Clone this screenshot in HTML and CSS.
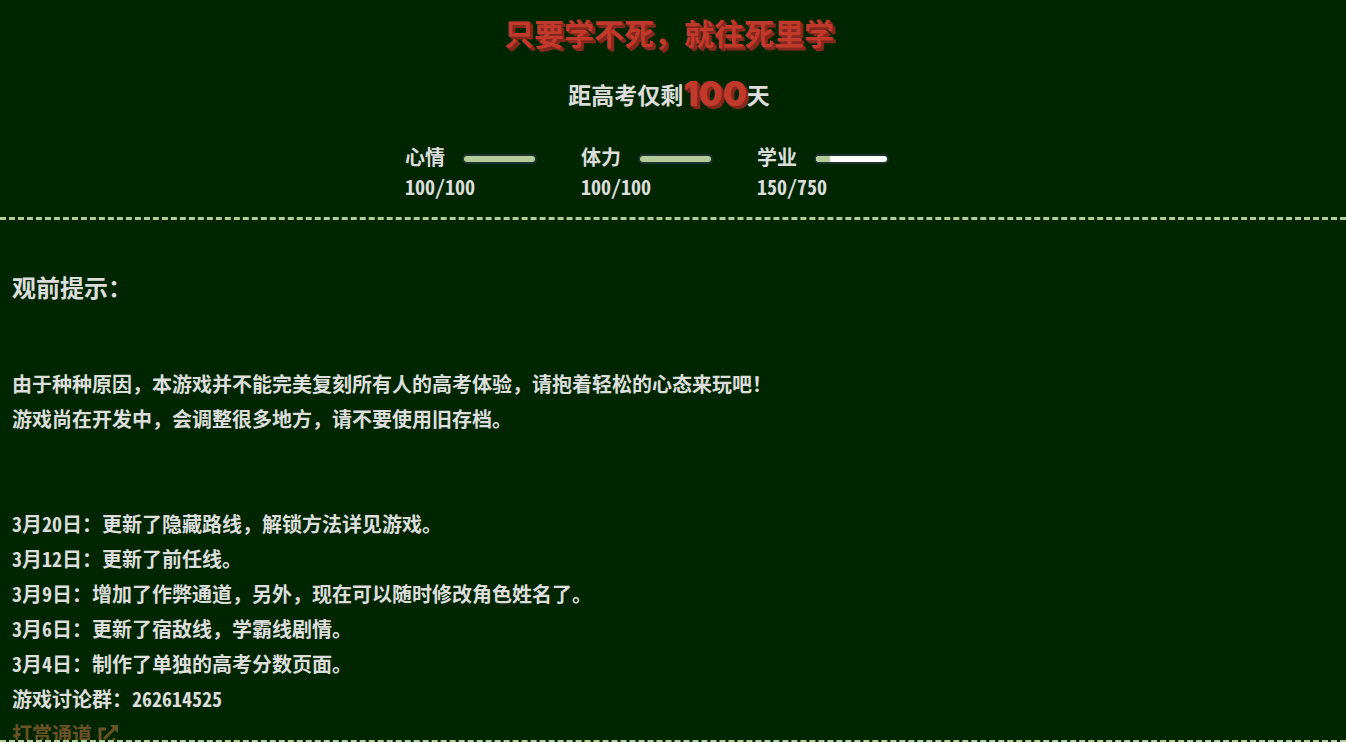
FILE: index.html
```html
<!DOCTYPE html>
<html lang="zh-CN">
<head>
<meta charset="utf-8">
<title>只要学不死，就往死里学</title>
<link rel="stylesheet" href="styles.css">
</head>
<body>
<header class="status">
  <h1 class="slogan">只要学不死，就往死里学</h1>
  <p class="countdown">距高考仅剩<strong class="days">100</strong>天</p>
  <div class="stats">
    <div class="stat">
      <div class="stat-row"><label for="mood">心情</label><progress class="bar" id="mood" value="100" max="100"></progress></div>
      <div>100/100</div>
    </div>
    <div class="stat">
      <div class="stat-row"><label for="energy">体力</label><progress class="bar" id="energy" value="100" max="100"></progress></div>
      <div>100/100</div>
    </div>
    <div class="stat">
      <div class="stat-row"><label for="study">学业</label><progress class="bar" id="study" value="150" max="750"></progress></div>
      <div>150/750</div>
    </div>
  </div>
</header>
<main class="story">
  <h2 class="notice">观前提示：</h2>
  <p class="para">由于种种原因，本游戏并不能完美复刻所有人的高考体验，请抱着轻松的心态来玩吧！<br>游戏尚在开发中，会调整很多地方，请不要使用旧存档。</p>
  <p class="para">3月20日：更新了隐藏路线，解锁方法详见游戏。<br>3月12日：更新了前任线。<br>3月9日：增加了作弊通道，另外，现在可以随时修改角色姓名了。<br>3月6日：更新了宿敌线，学霸线剧情。<br>3月4日：制作了单独的高考分数页面。<br>游戏讨论群：262614525<br><a class="donate" href="#">打赏通道<svg class="external" viewBox="0 0 20 20" aria-hidden="true"><path d="M8 4H2v15h14v-6" fill="none" stroke="currentColor" stroke-width="3"/><path d="M6 14L17 3" fill="none" stroke="currentColor" stroke-width="3"/><path d="M12 0h8v8z" fill="currentColor"/></svg></a></p>
</main>
<footer class="choices"></footer>
</body>
</html>
```

FILE: styles.css
```css
* {
  box-sizing: border-box;
}

body {
  margin: 0;
  height: 100vh;
  display: flex;
  flex-direction: column;
  overflow: hidden;
  background: #002600;
  color: #ddd;
  font: bold 20px/35px "Noto Sans Mono CJK SC", "Noto Sans CJK SC", sans-serif;
}

h1, h2, p {
  margin: 0;
}

.status {
  flex: none;
  padding: 9px 8px 15px 0;
  border-bottom: 3px dashed #b5cc99;
  text-align: center;
}

.slogan {
  font-size: 30px;
  line-height: 46px;
  color: #c0392b;
  text-shadow: 1px 1px #84271e, 2px 2px #84271e, 3px 3px #84271e;
}

.countdown {
  display: flex;
  justify-content: center;
  align-items: center;
  margin-top: 15px;
  font-size: 23px;
  line-height: 48px;
}

.days {
  font-family: Inter, sans-serif;
  font-weight: 900;
  font-size: 34px;
  color: #c0392b;
  text-shadow: 1px 1px #84271e, 2px 2px #84271e, 3px 3px #84271e;
}

.stats {
  display: flex;
  justify-content: center;
  margin-top: 24px;
  line-height: 30px;
  text-align: left;
}

.stat {
  width: 176px;
}

.stat-row {
  display: flex;
  align-items: center;
  gap: 17px;
}

.bar {
  appearance: none;
  width: 75px;
  height: 10px;
  margin-top: 3px;
  border: 2px solid #1d3330;
  border-radius: 5px;
  background: #fff;
  overflow: hidden;
}

.bar::-webkit-progress-bar {
  background: #fff;
}

.bar::-webkit-progress-value {
  background: #b5cc99;
}

.story {
  flex: 1;
  min-height: 0;
  overflow: hidden;
  padding: 50px 12px 0;
}

.notice {
  font-size: 24px;
  line-height: 34px;
}

.para {
  margin-top: 62px;
}

.para + .para {
  margin-top: 70px;
}

.donate {
  color: #6b5224;
  text-decoration: none;
}

.external {
  width: 20px;
  height: 20px;
  margin-left: 6px;
  vertical-align: -3px;
}

.choices {
  flex: none;
  margin-bottom: -1px;
  border-top: 3px dashed #b5cc99;
}
```
